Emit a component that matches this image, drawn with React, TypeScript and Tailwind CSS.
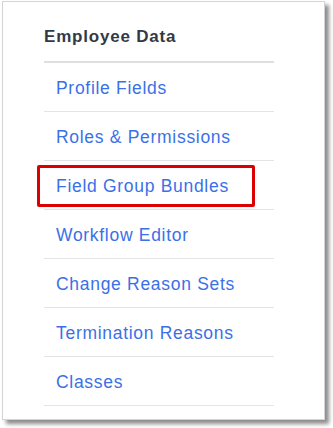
const links = [
  'Profile Fields',
  'Roles & Permissions',
  'Field Group Bundles',
  'Workflow Editor',
  'Change Reason Sets',
  'Termination Reasons',
  'Classes',
];

export default function App() {
  return (
    <div className="w-[333px] h-[428px] bg-white pt-[1px] pl-[2px] font-['Liberation_Sans',Arial,sans-serif]">
      <div className="w-[323px] h-[419px] bg-white border border-[#d4d4d4] shadow-[4px_4px_4px_rgba(0,0,0,0.45)] pl-[41px] pt-[23px]">
        <div className="w-[230px]">
          <h2 className="text-[17px] leading-[24px] font-bold tracking-[0.8px] text-[#333a45] pb-[12px] border-b-2 border-[#dfdfdf]">
            Employee Data
          </h2>
          <ul>
            {links.map((label) => (
              <li key={label} className="relative h-[49px] border-b border-[#e4e4e4] flex items-center pl-[12px] pt-[2px]">
                <a href="#" className="text-[17.5px] leading-[24px] tracking-[0.7px] text-[#3b70e8]">
                  {label}
                </a>
                {label === 'Field Group Bundles' && (
                  <span className="absolute left-[-7px] top-[4px] w-[218px] h-[42px] border-[3px] border-[#dd0000] rounded-[2px]" />
                )}
              </li>
            ))}
          </ul>
        </div>
      </div>
    </div>
  );
}
